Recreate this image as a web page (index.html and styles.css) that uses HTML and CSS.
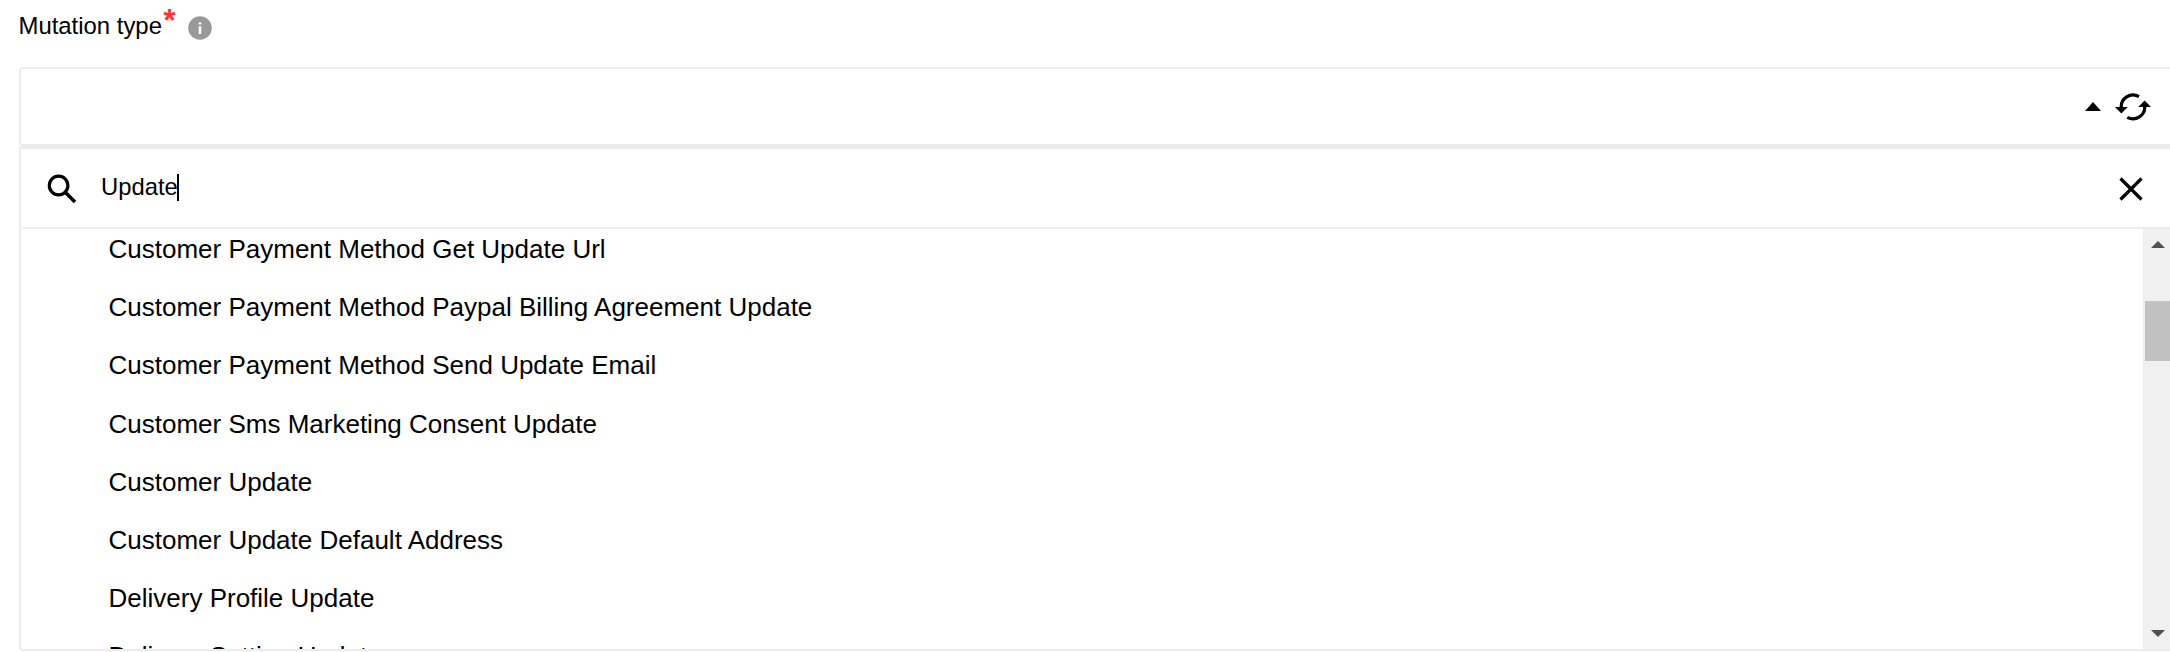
FILE: index.html
```html
<!DOCTYPE html>
<html lang="en">
<head>
<meta charset="utf-8">
<title>Mutation type</title>
<link rel="stylesheet" href="styles.css">
</head>
<body>
<div class="label-row">
  <span class="label">Mutation type</span><span class="required">*</span>
  <svg class="info" viewBox="0 0 24 24"><circle cx="12" cy="12" r="11.800" fill="#999"/><path d="M10.700 6.200h2.600v2.300h-2.600zM10.700 10.300h2.600v7.700h-2.600z" fill="#fff"/></svg>
</div>
<div class="select">
  <svg class="caret" viewBox="0 0 16 9"><path d="M0 9L8 0l8 9z"/></svg>
  <svg class="refresh" viewBox="0 0 36 28"><path d="M6.300 15A11.800 11.800 0 0 1 24 3.600M29.700 13A11.800 11.800 0 0 1 12.300 24.400" fill="none" stroke="#000" stroke-width="3.200"/><path d="M0 14h12.800L6.400 20.400zM23.200 14H36L29.600 7.600z"/></svg>
</div>
<div class="dropdown">
  <div class="search">
    <svg class="glass" viewBox="0 0 30 30"><circle cx="11.600" cy="11.500" r="9.300" fill="none" stroke="#000" stroke-width="3.200"/><path d="M18 18l10 10" stroke="#000" stroke-width="3.600"/></svg>
    <span class="query">Update</span><span class="cursor"></span>
    <svg class="clear" viewBox="0 0 24 24"><path d="M1.500 1.500l21 21M22.500 1.500l-21 21" stroke="#000" stroke-width="3.200"/></svg>
  </div>
  <div class="results">
    <ul class="options">
      <li>Customer Payment Method Get Update Url</li>
      <li>Customer Payment Method Paypal Billing Agreement Update</li>
      <li>Customer Payment Method Send Update Email</li>
      <li>Customer Sms Marketing Consent Update</li>
      <li>Customer Update</li>
      <li>Customer Update Default Address</li>
      <li>Delivery Profile Update</li>
      <li>Delivery Setting Update</li>
    </ul>
    <div class="scrollbar">
      <svg class="arrow" viewBox="0 0 14 7"><path d="M0 7l7-7 7 7z"/></svg>
      <div class="thumb"></div>
      <svg class="arrow down" viewBox="0 0 14 7"><path d="M0 0h14L7 7z"/></svg>
    </div>
  </div>
</div>
</body>
</html>
```
FILE: styles.css
```css
* { box-sizing: border-box; }
body {
  margin: 0;
  height: 652px;
  overflow: hidden;
  background: #fff;
  color: #000;
  font-family: "Liberation Sans", Arial, sans-serif;
}
svg { display: block; flex: none; }
.label-row {
  display: flex;
  align-items: flex-start;
  height: 67px;
  padding-left: 18.5px;
}
.label { width: 144px; font-size: 23.9px; line-height: 28px; padding-top: 12px; white-space: nowrap; }
.required { width: 12px; color: #f33; font-size: 31px; font-weight: bold; line-height: 34px; padding-top: 4px; margin-left: 1px; }
.info { width: 24px; height: 24px; margin: 16px 0 0 12.5px; }
.select {
  display: flex;
  align-items: center;
  justify-content: flex-end;
  height: 79px;
  padding: 0 19px 0 0;
  border: 2px solid #ececec;
  border-right: 0;
  border-radius: 4px 0 0 4px;
  box-shadow: 0 1px 0 #ececec;
  margin-left: 19px;
}
.caret { width: 16px; height: 9px; margin-right: 14px; }
.refresh { width: 36px; height: 28px; }
.dropdown {
  height: 504px;
  margin: 1px 0 0 19px;
  border: 2px solid #ececec;
  border-right: 0;
  border-radius: 2px 0 0 4px;
}
.search {
  display: flex;
  align-items: center;
  height: 80px;
  padding: 0 27px 0 26px;
  border-bottom: 2px solid #ececec;
  border-radius: 0 0 0 4px;
}
.glass { width: 30px; height: 30px; margin-top: 1px; }
.query { font-size: 23.8px; line-height: 28px; margin: -2px 0 0 24px; }
.cursor { width: 2px; height: 27px; margin: -2px 0 0 -1px; background: #000; }
.clear { width: 24px; height: 24px; margin: 2px 0 0 auto; }
.results { display: flex; height: 420px; overflow: hidden; }
.options { flex: 1; list-style: none; margin: -9px 0 0; padding: 0 0 0 87.5px; }
.options li { height: 58.2px; font-size: 26px; line-height: 58px; white-space: nowrap; }
.scrollbar {
  display: flex;
  flex-direction: column;
  width: 27px;
  padding: 12px 0 12px 2px;
  background: #f0f0f0;
}
.arrow { width: 14px; height: 7px; margin-left: 6px; fill: #505050; }
.thumb { height: 60px; margin-top: 53px; background: #c1c1c1; }
.down { margin-top: auto; }
```
